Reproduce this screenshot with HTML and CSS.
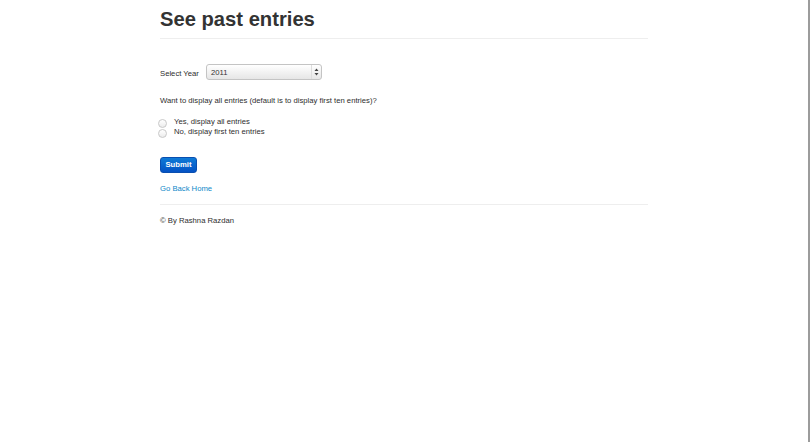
FILE: index.html
```html
<!DOCTYPE html>
<html>
<head>
<meta charset="utf-8">
<link rel="stylesheet" href="styles.css">
</head>
<body>
<div class="window">
  <div class="container">
    <div class="page-header"><h1>See past entries</h1></div>
    <form class="entries-form">
      <div class="year-row">
        <label class="year-label">Select Year</label>
        <div class="select">
          <span class="select-value">2011</span>
          <span class="select-arrows">
            <svg width="5" height="8" viewBox="0 0 5 8"><path d="M2.5 0.5 L4.5 3 L0.5 3 Z M2.5 7.5 L4.5 5 L0.5 5 Z" fill="#444"/></svg>
          </span>
        </div>
      </div>
      <p class="question">Want to display all entries (default is to display first ten entries)?</p>
      <div class="radios">
        <label class="radio"><span class="radio-dot"></span><span class="radio-text">Yes, display all entries</span></label>
        <label class="radio"><span class="radio-dot"></span><span class="radio-text">No, display first ten entries</span></label>
      </div>
      <button type="button" class="btn-submit">Submit</button>
    </form>
    <a class="home-link" href="#">Go Back Home</a>
    <footer class="footer">© By Rashna Razdan</footer>
  </div>
</div>
</body>
</html>
```
FILE: styles.css
```css
html, body {
  margin: 0;
  padding: 0;
  background: #ffffff;
}
body {
  font-family: "Liberation Sans", Arial, sans-serif;
  color: #2e2e2e;
  font-size: 7.7px;
}
.window {
  width: 808px;
  height: 442px;
  border-right: 2px solid #9c9c9c;
  display: flex;
  justify-content: center;
}
.container {
  width: 488px;
  display: flex;
  flex-direction: column;
  align-items: flex-start;
}
.page-header {
  align-self: stretch;
  margin-top: 7px;
  padding-bottom: 7px;
  border-bottom: 1px solid #eeeeee;
}
.page-header h1 {
  margin: 0;
  font-size: 20.2px;
  line-height: 24px;
  font-weight: bold;
  color: #333333;
}
.entries-form {
  display: flex;
  flex-direction: column;
  align-items: flex-start;
}
.year-row {
  margin-top: 25px;
  display: flex;
  align-items: flex-start;
}
.year-label {
  padding-top: 5px;
  width: 46px;
  line-height: 10px;
}
.select {
  width: 114px;
  height: 14px;
  border: 1px solid #c4c4c4;
  border-radius: 3px;
  background: linear-gradient(#ffffff, #e6e6e6);
  display: flex;
  align-items: center;
  justify-content: space-between;
  box-sizing: content-box;
}
.select-value {
  padding-left: 4px;
  font-size: 7.7px;
  color: #333;
}
.select-arrows {
  width: 9px;
  height: 14px;
  border-left: 1px solid #dddddd;
  display: flex;
  align-items: center;
  justify-content: center;
}
.question {
  margin: 16px 0 0 0;
  line-height: 10px;
}
.radios {
  margin-top: 11px;
  display: flex;
  flex-direction: column;
}
.radio {
  display: flex;
  align-items: center;
  height: 10px;
}
.radio-dot {
  width: 7px;
  height: 7px;
  border: 1px solid #c8c8c8;
  border-radius: 50%;
  background: linear-gradient(#ffffff, #ececec);
  margin-left: -2px;
  margin-top: 2px;
  margin-right: 7px;
}
.radio-text {
  line-height: 10px;
}
.btn-submit {
  margin-top: 20px;
  width: 37px;
  height: 16px;
  padding: 0;
  border: 1px solid #0a4fb0;
  border-radius: 3px;
  background: linear-gradient(#0f7ad6, #0452c4);
  color: #ffffff;
  font-family: "Liberation Sans", Arial, sans-serif;
  font-size: 7.7px;
  font-weight: bold;
  line-height: 14px;
}
.home-link {
  margin-top: 11px;
  color: #0e88c8;
  text-decoration: none;
  line-height: 10px;
}
.footer {
  align-self: stretch;
  margin-top: 10px;
  border-top: 1px solid #eeeeee;
  padding-top: 11px;
  line-height: 10px;
}
```
